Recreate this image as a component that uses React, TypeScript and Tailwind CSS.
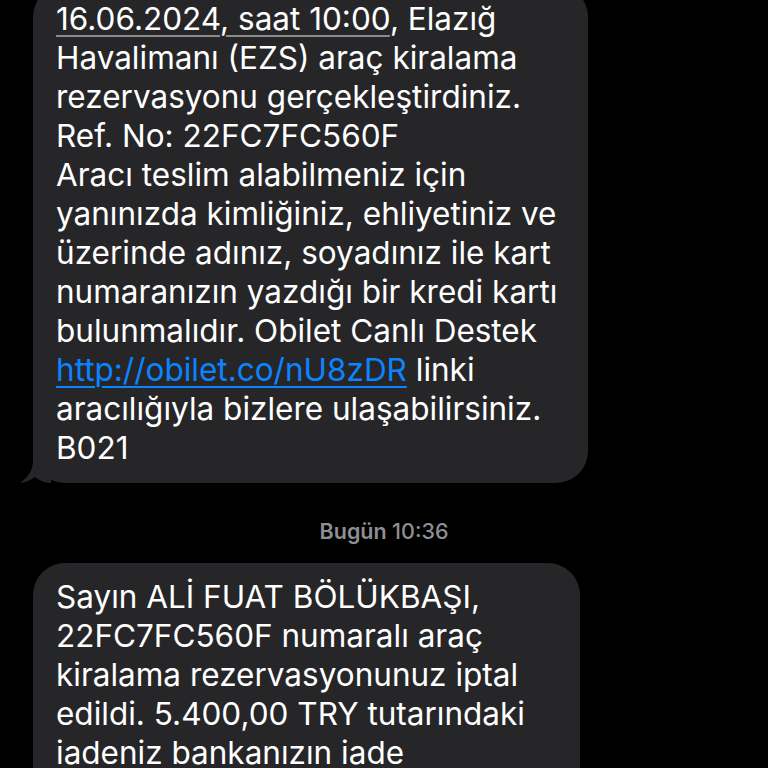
import React from 'react';

const font = { fontFamily: 'Inter, "Noto Sans", sans-serif' };

export default function App() {
  return (
    <div
      className="h-[768px] w-[768px] overflow-hidden bg-black text-white"
      style={font}
    >
      {/* Earlier message, scrolled partly out of view */}
      <div className="relative ml-[33px] -mt-[15px] w-[555px]">
        <div className="rounded-[32px] bg-[#262628] pt-[14px] pb-[16px] pl-[23px] pr-[12px] text-[31.5px] leading-[39px]">
          <span className="underline decoration-[#8a8a8a] decoration-2 underline-offset-[5px]">
            16.06.2024, saat 10:00
          </span>
          , Elazığ
          <br />
          Havalimanı (EZS) araç kiralama
          <br />
          rezervasyonu gerçekleştirdiniz.
          <br />
          Ref. No: 22FC7FC560F
          <br />
          Aracı teslim alabilmeniz için
          <br />
          yanınızda kimliğiniz, ehliyetiniz ve
          <br />
          üzerinde adınız, soyadınız ile kart
          <br />
          numaranızın yazdığı bir kredi kartı
          <br />
          bulunmalıdır. Obilet Canlı Destek
          <br />
          <span className="text-[#0a84ff] underline decoration-2 underline-offset-[5px]">
            http://obilet.co/nU8zDR
          </span>{' '}
          linki
          <br />
          aracılığıyla bizlere ulaşabilirsiniz.
          <br />
          B021
        </div>
        {/* bubble tail */}
        <svg
          className="absolute -left-[12px] bottom-0"
          width="40"
          height="36"
          viewBox="0 0 40 36"
        >
          <path
            d="M12 0 L30 0 L30 36 C24 36 18 33 14 30 C10 33 4 36 -2 36 C6 32 12 24 12 14 Z"
            fill="#262628"
          />
        </svg>
      </div>

      <div className="mt-[34px] text-center text-[21.5px] font-semibold leading-[28px] text-[#8e8e93]">
        Bugün <span className="font-medium">10:36</span>
      </div>

      <div className="ml-[33px] mt-[18px] w-[547px]">
        <div className="rounded-[32px] bg-[#262628] py-[14px] pl-[23px] pr-[12px] text-[31.5px] leading-[39px]">
          Sayın ALİ FUAT BÖLÜKBAŞI,
          <br />
          22FC7FC560F numaralı araç
          <br />
          kiralama rezervasyonunuz iptal
          <br />
          edildi. 5.400,00 TRY tutarındaki
          <br />
          iadeniz bankanızın iade
          <br />
          süreçlerine bağlı olarak
          <br />
          yansıyacaktır.
        </div>
      </div>
    </div>
  );
}
